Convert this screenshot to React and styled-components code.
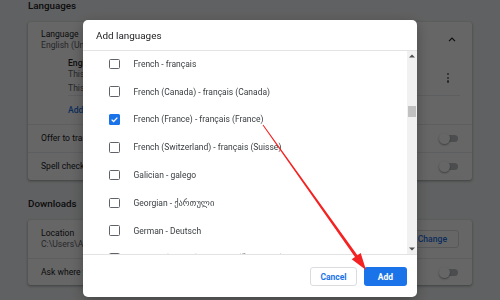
import React from "react";
import styled, { createGlobalStyle } from "styled-components";

const GlobalStyle = createGlobalStyle`
  html, body {
    margin: 0;
    padding: 0;
    width: 500px;
    height: 300px;
    overflow: hidden;
    background: #f1f3f4;
    font-family: Roboto, "DejaVu Sans", "Liberation Sans", sans-serif;
    color: #202124;
  }
`;

const languages = [
  { name: "French - français" },
  { name: "French (Canada) - français (Canada)" },
  { name: "French (France) - français (France)", checked: true },
  { name: "French (Switzerland) - français (Suisse)" },
  { name: "Galician - galego" },
  { name: "Georgian - ქართული" },
  { name: "German - Deutsch" },
  { name: "German (Austria) - Deutsch (Österreich)" },
];

const App = () => {
  return (
    <>
      <GlobalStyle />
      <Settings>
        <SectionTitle>Languages</SectionTitle>
        <Card>
          <LanguageHeader>
            <TextStack>
              <Label>Language</Label>
              <Secondary>English (United States)</Secondary>
            </TextStack>
            <Chevron viewBox="0 0 8 5">
              <path d="M1 4.2L4 1.2L7 4.2" fill="none" stroke="#202124" strokeWidth="1.2" />
            </Chevron>
          </LanguageHeader>
          <SubBlock>
            <LanguageItem>
              <TextStack>
                <ItemName>English (United States)</ItemName>
                <Secondary>This language is used to display the Google Chrome UI</Secondary>
                <Secondary $gap>This language is used for spell checking</Secondary>
              </TextStack>
              <Dots>
                <span />
                <span />
                <span />
              </Dots>
            </LanguageItem>
            <AddRow>Add languages</AddRow>
          </SubBlock>
          <SettingRow>
            <Label>Offer to translate pages that aren't in a language you read</Label>
            <Toggle />
          </SettingRow>
          <SettingRow>
            <Label>Spell check</Label>
            <Toggle />
          </SettingRow>
        </Card>
        <SectionTitle $spaced>Downloads</SectionTitle>
        <Card>
          <LocationRow>
            <TextStack>
              <Label>Location</Label>
              <Secondary>C:\Users\Administrator\Downloads</Secondary>
            </TextStack>
            <ChangeButton>Change</ChangeButton>
          </LocationRow>
          <SettingRow $short>
            <Label>Ask where to save each file before downloading</Label>
            <Toggle />
          </SettingRow>
        </Card>
      </Settings>

      <Scrim>
        <Dialog>
          <DialogHeader>Add languages</DialogHeader>
          <ListArea>
            <List>
              {languages.map((lang) => (
                <LanguageOption key={lang.name}>
                  <Checkbox $checked={lang.checked}>
                    {lang.checked && (
                      <svg viewBox="0 0 12 12" width="9" height="9">
                        <path d="M2.2 6.2L4.8 8.7L9.8 3.5" fill="none" stroke="#fff" strokeWidth="1.7" />
                      </svg>
                    )}
                  </Checkbox>
                  <OptionText>{lang.name}</OptionText>
                </LanguageOption>
              ))}
            </List>
            <Scrollbar>
              <svg viewBox="0 0 6 4" width="6" height="4">
                <path d="M0 3.5L3 0.5L6 3.5Z" fill="#505050" />
              </svg>
              <ScrollTrack>
                <Thumb />
              </ScrollTrack>
              <svg viewBox="0 0 6 4" width="6" height="4">
                <path d="M0 0.5L3 3.5L6 0.5Z" fill="#505050" />
              </svg>
            </Scrollbar>
          </ListArea>
          <Footer>
            <CancelButton>Cancel</CancelButton>
            <AddButton>Add</AddButton>
          </Footer>
        </Dialog>
      </Scrim>

      <ArrowLayer viewBox="0 0 500 300">
        <polygon
          points="263.4,124.7 357.4,255.2 360.7,252.9 366,270 351.7,259.3 355,257 262.6,125.3"
          fill="#f42222"
        />
      </ArrowLayer>
    </>
  );
};

export default App;

const Settings = styled.div`
  width: 444px;
  padding: 0 28px;
  margin-top: -2px;
  display: flex;
  flex-direction: column;
`;

const SectionTitle = styled.div`
  font-size: 9.8px;
  font-weight: 500;
  line-height: 16px;
  color: #202124;
  margin: ${({ $spaced }) => ($spaced ? "16px 0 8px" : "0 0 8px")};
`;

const Card = styled.div`
  background: #fff;
  border-radius: 3px;
  box-shadow: 0 1px 2px rgba(60, 64, 67, 0.3), 0 1px 3px 1px rgba(60, 64, 67, 0.15);
  display: flex;
  flex-direction: column;
`;

const TextStack = styled.div`
  display: flex;
  flex-direction: column;
  min-width: 0;
`;

const Label = styled.div`
  font-size: 8.6px;
  line-height: 11px;
  color: #202124;
  white-space: nowrap;
`;

const Secondary = styled.div`
  font-size: 8.6px;
  line-height: 11px;
  color: #5f6368;
  white-space: nowrap;
  margin-top: ${({ $gap }) => ($gap ? "3px" : "0")};
`;

const ItemName = styled(Label)`
  font-weight: 500;
`;

const LanguageHeader = styled.div`
  height: 34px;
  display: flex;
  align-items: center;
  justify-content: space-between;
  padding: 1px 16px 0 13px;
  box-sizing: border-box;
`;

const Chevron = styled.svg`
  width: 8px;
  height: 5px;
`;

const SubBlock = styled.div`
  padding: 0 12px 0 40px;
  display: flex;
  flex-direction: column;
`;

const LanguageItem = styled.div`
  height: 40px;
  display: flex;
  justify-content: space-between;
  padding-top: 2px;
  box-sizing: border-box;
  border-bottom: 1px solid #e8eaed;
`;

const Dots = styled.div`
  display: flex;
  flex-direction: column;
  gap: 1.5px;
  margin: 15px 11px 0 0;
  span {
    width: 2.2px;
    height: 2.2px;
    border-radius: 50%;
    background: #5f6368;
  }
`;

const AddRow = styled.div`
  height: 28px;
  display: flex;
  align-items: center;
  font-size: 8.6px;
  font-weight: 500;
  color: #1a73e8;
`;

const SettingRow = styled.div`
  height: ${({ $short }) => ($short ? "27px" : "28px")};
  display: flex;
  align-items: center;
  justify-content: space-between;
  padding: 0 14px 0 13px;
  border-top: 1px solid #e8eaed;
  box-sizing: border-box;
`;

const LocationRow = styled.div`
  height: 38px;
  display: flex;
  align-items: center;
  justify-content: space-between;
  padding: 0 13px 0 13px;
  box-sizing: border-box;
`;

const ChangeButton = styled.div`
  height: 18px;
  padding: 0 11px;
  display: flex;
  align-items: center;
  border: 1px solid #dadce0;
  border-radius: 3px;
  font-size: 8.6px;
  font-weight: 500;
  color: #1a73e8;
  box-sizing: border-box;
`;

const Toggle = styled.div`
  position: relative;
  width: 16px;
  height: 7px;
  border-radius: 4px;
  background: #bdc1c6;
  margin-right: 0;
  flex-shrink: 0;
  &::after {
    content: "";
    position: absolute;
    left: -3px;
    top: -2px;
    width: 11px;
    height: 11px;
    border-radius: 50%;
    background: #fff;
    box-shadow: 0 1px 2px rgba(0, 0, 0, 0.4);
  }
`;

const Scrim = styled.div`
  position: fixed;
  inset: 0;
  background: rgba(0, 0, 0, 0.6);
  display: flex;
  justify-content: center;
  align-items: flex-start;
  padding-top: 20px;
`;

const Dialog = styled.div`
  width: 334px;
  height: 277px;
  background: #fff;
  border-radius: 5px;
  box-shadow: 0 4px 14px rgba(0, 0, 0, 0.3);
  display: flex;
  flex-direction: column;
  overflow: hidden;
`;

const DialogHeader = styled.div`
  height: 30px;
  flex-shrink: 0;
  display: flex;
  align-items: center;
  padding-left: 13px;
  font-size: 9.9px;
  color: #202124;
  border-bottom: 1px solid #e3e3e3;
`;

const ListArea = styled.div`
  height: 203px;
  flex-shrink: 0;
  display: flex;
`;

const List = styled.div`
  flex: 1;
  overflow: hidden;
  display: flex;
  flex-direction: column;
  & > :first-child {
    margin-top: -1px;
  }
`;

const LanguageOption = styled.div`
  height: 27.8px;
  flex-shrink: 0;
  display: flex;
  align-items: center;
  gap: 14px;
  padding-left: 26px;
`;

const Checkbox = styled.div`
  width: 10.5px;
  height: 10.5px;
  box-sizing: border-box;
  border-radius: 1.5px;
  border: ${({ $checked }) => ($checked ? "none" : "1.4px solid #5f6368")};
  background: ${({ $checked }) => ($checked ? "#1a73e8" : "#fff")};
  display: flex;
  align-items: center;
  justify-content: center;
`;

const OptionText = styled.span`
  font-size: 8.5px;
  color: #3c4043;
  white-space: nowrap;
`;

const Scrollbar = styled.div`
  width: 10px;
  background: #f1f1f1;
  display: flex;
  flex-direction: column;
  align-items: center;
  padding: 3px 0 3px;
  box-sizing: border-box;
`;

const ScrollTrack = styled.div`
  flex: 1;
  width: 100%;
  padding-top: 48px;
  box-sizing: border-box;
  display: flex;
  justify-content: center;
`;

const Thumb = styled.div`
  width: 8px;
  height: 11px;
  background: #c1c1c1;
`;

const Footer = styled.div`
  flex: 1;
  border-top: 1px solid #e3e3e3;
  display: flex;
  align-items: center;
  justify-content: flex-end;
  gap: 7px;
  padding: 1px 10px 0 0;
`;

const BaseButton = styled.div`
  height: 19px;
  box-sizing: border-box;
  border-radius: 3px;
  display: flex;
  align-items: center;
  justify-content: center;
  font-size: 8.5px;
  font-weight: 700;
`;

const CancelButton = styled(BaseButton)`
  width: 47px;
  border: 1px solid #dadce0;
  color: #1a73e8;
  background: #fff;
`;

const AddButton = styled(BaseButton)`
  width: 43px;
  background: #1a73e8;
  color: #fff;
`;

const ArrowLayer = styled.svg`
  position: fixed;
  left: 0;
  top: 0;
  width: 500px;
  height: 300px;
  pointer-events: none;
`;
